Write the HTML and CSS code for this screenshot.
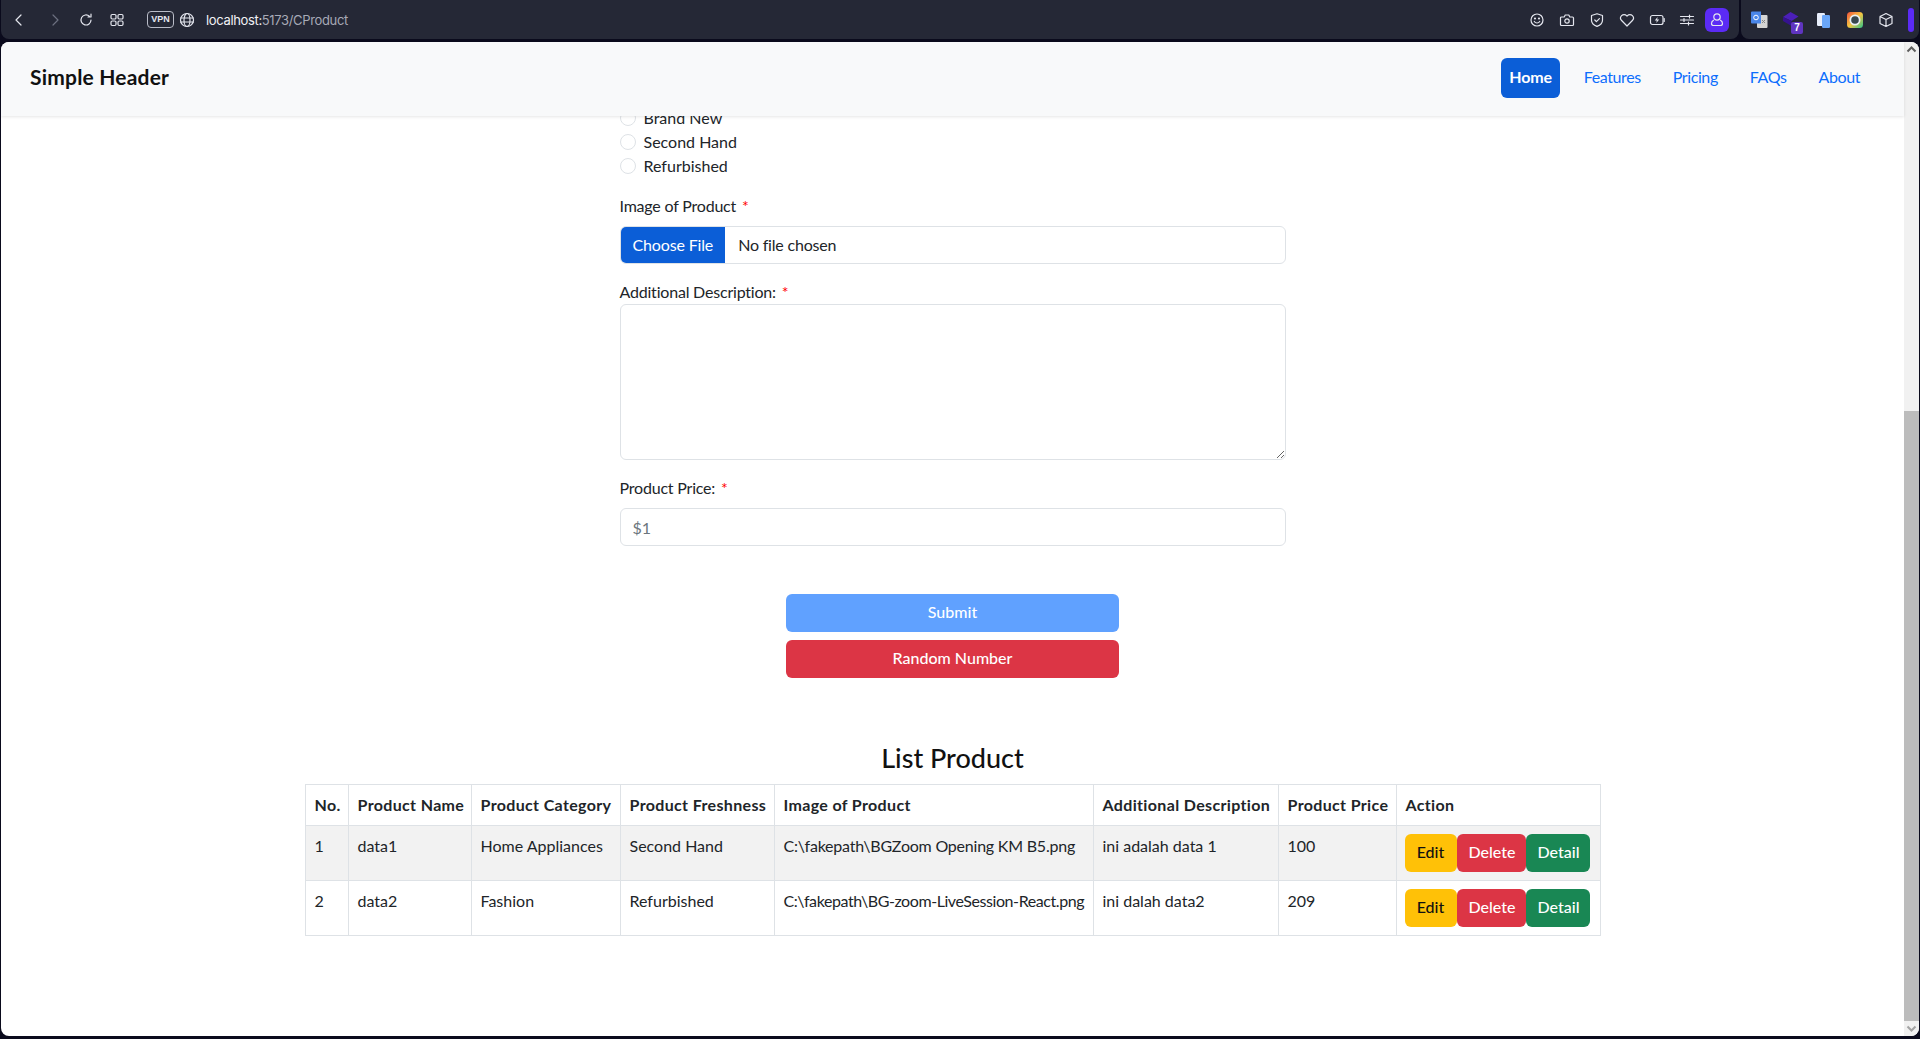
FILE: index.html
```html
<!DOCTYPE html>
<html lang="en">
<head>
    <meta charset="UTF-8">
    <title>CProduct</title>
    <link rel="stylesheet" href="styles.css">
</head>
<body>
    <div class="browser-bar">
        <div class="bar-panel bar-main">
            <div class="bar-left">
                <svg class="ico ico-back" viewBox="0 0 16 16"><path d="M10 3 5 8l5 5"/></svg>
                <svg class="ico ico-forward" viewBox="0 0 16 16"><path d="m6 3 5 5-5 5"/></svg>
                <svg class="ico ico-reload" viewBox="0 0 16 16"><path d="M13 8a5 5 0 1 1-1.6-3.700M13 2v3h-3"/></svg>
                <svg class="ico ico-grid" viewBox="0 0 16 16"><rect x="2" y="2.500" width="5" height="4.500" rx="1.200"/><rect x="9" y="2.500" width="5" height="4.500" rx="1.200"/><rect x="2" y="9" width="5" height="4.500" rx="1.200"/><rect x="9" y="9" width="5" height="4.500" rx="1.200"/></svg>
                <span class="vpn-badge">VPN</span>
                <svg class="ico ico-globe" viewBox="0 0 16 16"><circle cx="8" cy="8" r="6.500"/><ellipse cx="8" cy="8" rx="3" ry="6.500"/><path d="M1.500 6h13M1.500 10h13"/></svg>
                <span class="url"><span class="url-host">localhost:</span>5173/CProduct</span>
            </div>
            <div class="bar-right">
                <svg class="ico" viewBox="0 0 16 16"><circle cx="8" cy="8" r="6"/><circle cx="6" cy="6.500" r=".5"/><circle cx="10" cy="6.500" r=".5"/><path d="M5.300 9.500c1.200 2 4.200 2 5.400 0"/></svg>
                <svg class="ico" viewBox="0 0 16 16"><path d="M2.500 5h2.700l1-2h3.600l1 2h2.700a1 1 0 0 1 1 1v6.500a1 1 0 0 1-1 1h-11a1 1 0 0 1-1-1V6a1 1 0 0 1 1-1z"/><circle cx="8" cy="9" r="2.200"/></svg>
                <svg class="ico" viewBox="0 0 16 16"><path d="M8 1.800 13.500 3.500v4.700c0 3-2.400 5-5.500 6.200-3.100-1.200-5.500-3.200-5.500-6.200V3.500z"/><path d="m5.800 8 1.600 1.600 3-3"/></svg>
                <svg class="ico" viewBox="0 0 16 16"><path d="M8 14 2.600 8.500a3.400 3.400 0 0 1 0-4.800 3.500 3.500 0 0 1 5 0L8 4.200l.4-.5a3.500 3.500 0 0 1 5 0 3.400 3.400 0 0 1 0 4.800z"/></svg>
                <svg class="ico" viewBox="0 0 16 16"><rect x="1.500" y="3.500" width="12.500" height="9" rx="2"/><path d="M15.200 6.500v3"/><path class="ico-fill" d="M8.600 5 5.800 8.500h2l-.5 2.500 2.900-3.500h-2z"/></svg>
                <svg class="ico" viewBox="0 0 16 16"><path d="M1.500 4.500h13M1.500 8h13M1.500 11.500h13"/><path d="M10.500 3v3M5 6.500v3M9.500 10v3"/></svg>
                <span class="profile-btn">
                    <svg class="ico" viewBox="0 0 16 16"><circle cx="8" cy="5" r="3.200"/><path d="M4.500 8.200C3 9 2.500 10.200 2.500 11.500c0 1.300 1 2 2 2h7c1 0 2-.7 2-2 0-1.300-.5-2.500-2-3.300"/></svg>
                </span>
            </div>
        </div>
        <div class="bar-panel bar-ext">
            <svg class="ext" viewBox="0 0 18 18"><rect x="7" y="4" width="10.500" height="13" rx="1" fill="#d5d5d5"/><path d="M1 1.500a1 1 0 0 1 1-1h9v12H2a1 1 0 0 1-1-1z" fill="#4a86e8"/><circle cx="6" cy="6.500" r="2.300" fill="none" stroke="#fff" stroke-width="1"/><path d="m12 9 3 3M15 9l-3 3" stroke="#888" stroke-width="1"/></svg>
            <span class="ext-seven">
                <svg class="ext" viewBox="0 0 18 18"><path d="m8.500 1 8 4.500-7 4.500L1 6z" fill="#4b1fb8"/><path d="m1 6 8.500 4v5L1 10z" fill="#35128f"/></svg>
                <span class="seven-badge">7</span>
            </span>
            <svg class="ext" viewBox="0 0 18 18"><rect x="3" y="2" width="8" height="13" rx="1.200" fill="#e8eefb"/><rect x="8" y="4" width="8" height="13" rx="1.200" fill="#6aa6f8"/></svg>
            <svg class="ext" viewBox="0 0 18 18"><defs><linearGradient id="ringGrad" x1="0" y1="0" x2="1" y2="1"><stop offset="0" stop-color="#f0503c"/><stop offset=".5" stop-color="#f5c542"/><stop offset="1" stop-color="#2bc48a"/></linearGradient></defs><rect width="16" height="16" x="1" y="1" rx="3.500" fill="url(#ringGrad)"/><circle cx="9" cy="9" r="5.500" fill="#e8f0f5"/><circle cx="9" cy="9" r="3.800" fill="#37474f"/></svg>
            <svg class="ico" viewBox="0 0 16 16"><path d="M8 1.500 14 4.500v7L8 14.500 2 11.500v-7zM2 4.500 8 7.500l6-3M8 7.500v7"/></svg>
            <span class="ext-bar"></span>
        </div>
    </div>

    <div class="window">
        <div class="page">
            <header class="site-header">
                <span class="brand">Simple Header</span>
                <nav class="nav">
                    <a href="#" class="nav-link active">Home</a>
                    <a href="#" class="nav-link">Features</a>
                    <a href="#" class="nav-link">Pricing</a>
                    <a href="#" class="nav-link">FAQs</a>
                    <a href="#" class="nav-link">About</a>
                </nav>
            </header>

            <main class="content">
                <form class="product-form">
                    <label class="radio-row"><input type="radio" name="fresh"> Brand New</label>
                    <label class="radio-row"><input type="radio" name="fresh"> Second Hand</label>
                    <label class="radio-row"><input type="radio" name="fresh"> Refurbished</label>

                    <label class="form-label" for="image">Image of Product <span class="req">*</span></label>
                    <input type="file" id="image" class="form-control file-control">

                    <label class="form-label label-tight" for="desc">Additional Description: <span class="req">*</span></label>
                    <textarea id="desc" class="form-control desc-control"></textarea>

                    <label class="form-label" for="price">Product Price: <span class="req">*</span></label>
                    <input type="text" id="price" class="form-control" placeholder="$1">

                    <div class="form-actions">
                        <button type="button" class="btn btn-submit">Submit</button>
                        <button type="button" class="btn btn-random">Random Number</button>
                    </div>
                </form>

                <h2 class="list-title">List Product</h2>
                <table class="product-table">
                    <thead>
                        <tr>
                            <th class="col-no">No.</th>
                            <th class="col-name">Product Name</th>
                            <th class="col-cat">Product Category</th>
                            <th class="col-fresh">Product Freshness</th>
                            <th class="col-img">Image of Product</th>
                            <th class="col-desc">Additional Description</th>
                            <th class="col-price">Product Price</th>
                            <th>Action</th>
                        </tr>
                    </thead>
                    <tbody>
                        <tr class="striped">
                            <td>1</td>
                            <td>data1</td>
                            <td>Home Appliances</td>
                            <td>Second Hand</td>
                            <td class="file-path">C:\fakepath\BGZoom Opening KM B5.png</td>
                            <td>ini adalah data 1</td>
                            <td>100</td>
                            <td class="actions">
                                <button type="button" class="btn btn-edit">Edit</button><button type="button" class="btn btn-delete">Delete</button><button type="button" class="btn btn-detail">Detail</button>
                            </td>
                        </tr>
                        <tr>
                            <td>2</td>
                            <td>data2</td>
                            <td>Fashion</td>
                            <td>Refurbished</td>
                            <td class="file-path file-path-long">C:\fakepath\BG-zoom-LiveSession-React.png</td>
                            <td>ini dalah data2</td>
                            <td>209</td>
                            <td class="actions">
                                <button type="button" class="btn btn-edit">Edit</button><button type="button" class="btn btn-delete">Delete</button><button type="button" class="btn btn-detail">Detail</button>
                            </td>
                        </tr>
                    </tbody>
                </table>
            </main>
        </div>

        <div class="scrollbar">
            <svg class="scroll-arrow" viewBox="0 0 15 15"><path d="m3.500 9.500 4-4 4 4"/></svg>
            <div class="scroll-thumb"></div>
            <svg class="scroll-arrow arrow-down" viewBox="0 0 15 15"><path d="m3.500 5.500 4 4 4-4"/></svg>
        </div>
    </div>
</body>
</html>
```

FILE: styles.css
```css
:root {
    --primary: #0b5ed7;
    --link: #0d6efd;
    --danger: #dc3545;
    --border-color: #dee2e6;
    --text: #212529;
    --radius: 6px;
}

* {
    box-sizing: border-box;
}

html, body {
    margin: 0;
    height: 100%;
    overflow: hidden;
}

body {
    display: flex;
    flex-direction: column;
    background: #0a0a1c;
    color: var(--text);
    font-family: Lato, "Noto Sans", sans-serif;
    font-size: 16px;
    line-height: 24px;
}

/* browser chrome */
.browser-bar {
    display: flex;
    gap: 2px;
    height: 42px;
    padding: 0 1px 3px;
    flex-shrink: 0;
}

.bar-panel {
    display: flex;
    align-items: center;
    background: #252836;
    border-radius: 0 0 8px 8px;
}

.bar-main {
    flex: 1;
    justify-content: space-between;
    padding: 0 10px;
}

.bar-left, .bar-right, .bar-ext {
    display: flex;
    align-items: center;
}

.bar-right {
    gap: 14px;
}

.bar-ext {
    width: 178px;
    padding-left: 9px;
    padding-right: 5px;
    justify-content: space-between;
}

.ico {
    width: 16px;
    height: 16px;
    fill: none;
    stroke: #e4e6ee;
    stroke-width: 1.200;
    stroke-linecap: round;
    stroke-linejoin: round;
    flex-shrink: 0;
}

.ico-fill {
    fill: #e4e6ee;
    stroke: none;
}

.ico-forward {
    stroke: #6c7080;
    margin-left: 20px;
}

.ico-reload {
    margin-left: 15px;
}

.ico-grid {
    margin-left: 15px;
}

.ico-globe {
    margin-left: 5px;
}

.vpn-badge {
    margin-left: 22px;
    width: 27px;
    height: 17px;
    border: 1px solid #b9bcc8;
    border-radius: 4px;
    color: #e4e6ee;
    font: 700 9px/15px "Liberation Sans", sans-serif;
    text-align: center;
}

.url {
    margin-left: 11px;
    color: #a7aab6;
    font-family: Inter, sans-serif;
    font-size: 13px;
    letter-spacing: -0.35px;
}

.url-host {
    color: #f0f1f5;
}

.profile-btn {
    display: flex;
    align-items: center;
    justify-content: center;
    width: 24px;
    height: 24px;
    margin-left: -4px;
    background: #5b2bf5;
    border-radius: 6px;
}

.ext {
    width: 18px;
    height: 18px;
    flex-shrink: 0;
}

.ext-seven {
    position: relative;
    display: flex;
}

.seven-badge {
    position: absolute;
    right: -3px;
    bottom: -5px;
    width: 12px;
    height: 12px;
    background: #5f35c0;
    border-radius: 2px;
    color: #fff;
    font: 700 10px/12px "Liberation Sans", sans-serif;
    text-align: center;
}

.ext-bar {
    width: 6px;
    height: 24px;
    background: #5b2bf5;
    border-radius: 3px;
}

/* page window */
.window {
    flex: 1;
    display: flex;
    min-height: 0;
    margin: 0 1px 3px;
    background: #fff;
    border-radius: 8px;
    overflow: hidden;
}

.page {
    flex: 1;
    display: flex;
    flex-direction: column;
    min-width: 0;
}

.scrollbar {
    width: 15px;
    display: flex;
    flex-direction: column;
    background: #f1f1f1;
}

.scroll-thumb {
    flex: 0 0 610px;
    margin-top: auto;
    background: #bcbcbc;
}

.scroll-arrow {
    width: 15px;
    height: 15px;
    flex-shrink: 0;
    fill: none;
    stroke: #5e5e5e;
    stroke-width: 2;
}

.arrow-down {
    stroke: #a3a3a3;
}

.site-header {
    position: relative;
    z-index: 1;
    display: flex;
    align-items: center;
    justify-content: space-between;
    height: 74px;
    padding: 0 28px 2px 29px;
    background: #f8f9fa;
    box-shadow: 0 1px 3px rgba(0, 0, 0, 0.1);
    flex-shrink: 0;
}

.brand {
    margin-top: -2px;
    font-size: 21px;
    font-weight: 700;
    letter-spacing: 0.2px;
    color: #111;
}

.nav {
    display: flex;
}

.nav-link {
    padding: 7px 16px 9px;
    color: var(--link);
    text-decoration: none;
    border-radius: var(--radius);
    letter-spacing: -0.4px;
}

.nav-link.active {
    margin-right: 8px;
    padding: 7px 8px 9px;
    background: var(--primary);
    color: #fff;
    font-weight: 700;
    letter-spacing: -0.2px;
}

/* form */
.content {
    flex: 1;
    min-height: 0;
    display: flex;
    flex-direction: column;
    align-items: center;
    overflow: hidden;
}

.product-form {
    display: flex;
    flex-direction: column;
    width: 666px;
    margin-top: -10px;
}

.radio-row {
    display: flex;
    align-items: center;
    gap: 8px;
    height: 24px;
}

.radio-row input {
    appearance: none;
    width: 16px;
    height: 16px;
    margin: 0;
    background: #fff;
    border: 1px solid var(--border-color);
    border-radius: 50%;
}

.form-label {
    margin-top: 16px;
    margin-bottom: 8px;
    letter-spacing: -0.2px;
}

.label-tight {
    margin-bottom: 0;
}

.req {
    color: red;
    margin-left: 2px;
}

.form-control {
    display: block;
    width: 100%;
    height: 38px;
    padding: 6px 12px;
    background: #fff;
    border: 1px solid var(--border-color);
    border-radius: var(--radius);
    color: var(--text);
    font: inherit;
}

.form-control::placeholder {
    color: #6c757d;
}

.file-control {
    padding: 0;
    overflow: hidden;
    letter-spacing: -0.2px;
}

.file-control::file-selector-button {
    height: 36px;
    margin-right: 13px;
    padding: 0 12px;
    background: var(--primary);
    border: 0;
    color: #fff;
    font: inherit;
    letter-spacing: -0.15px;
}

.desc-control {
    height: 156px;
    resize: vertical;
}

.form-actions {
    display: flex;
    flex-direction: column;
    align-items: center;
    gap: 8px;
    margin-top: 48px;
}

.btn {
    height: 38px;
    padding: 0 12px 2px;
    border: 0;
    border-radius: var(--radius);
    color: #fff;
    font: inherit;
    font-weight: 500;
}

.btn-submit, .btn-random {
    width: 333px;
}

.btn-submit {
    background: #60a1ff;
}

.btn-random {
    background: var(--danger);
}

.list-title {
    margin: 62px 0 8px;
    height: 36px;
    font-size: 27px;
    line-height: 36px;
    font-weight: 500;
    color: #111;
}

/* table */
.product-table {
    width: 1296px;
    table-layout: fixed;
    border-collapse: collapse;
}

.product-table th, .product-table td {
    padding: 8px 8px 8px 9px;
    border: 1px solid var(--border-color);
    text-align: left;
    vertical-align: top;
    overflow: hidden;
    white-space: nowrap;
}

.product-table th {
    height: 40px;
    font-weight: 700;
    letter-spacing: 0.35px;
}

.product-table .col-no { width: 43px; }
.product-table .col-name { width: 123px; }
.product-table .col-cat { width: 149px; }
.product-table .col-fresh { width: 154px; }
.product-table .col-img { width: 319px; }
.product-table .col-desc { width: 185px; }
.product-table .col-price { width: 118px; }

.product-table .file-path {
    letter-spacing: -0.22px;
}

.product-table .file-path-long {
    letter-spacing: -0.42px;
}

.product-table .actions {
    padding-left: 8px;
}

.striped td {
    background: #f2f2f2;
}

.actions .btn {
    vertical-align: top;
}

.btn-edit {
    width: 52px;
    background: #ffc107;
    color: #111;
}

.btn-delete {
    width: 69px;
    background: var(--danger);
}

.btn-detail {
    width: 64px;
    background: #198754;
}
```
